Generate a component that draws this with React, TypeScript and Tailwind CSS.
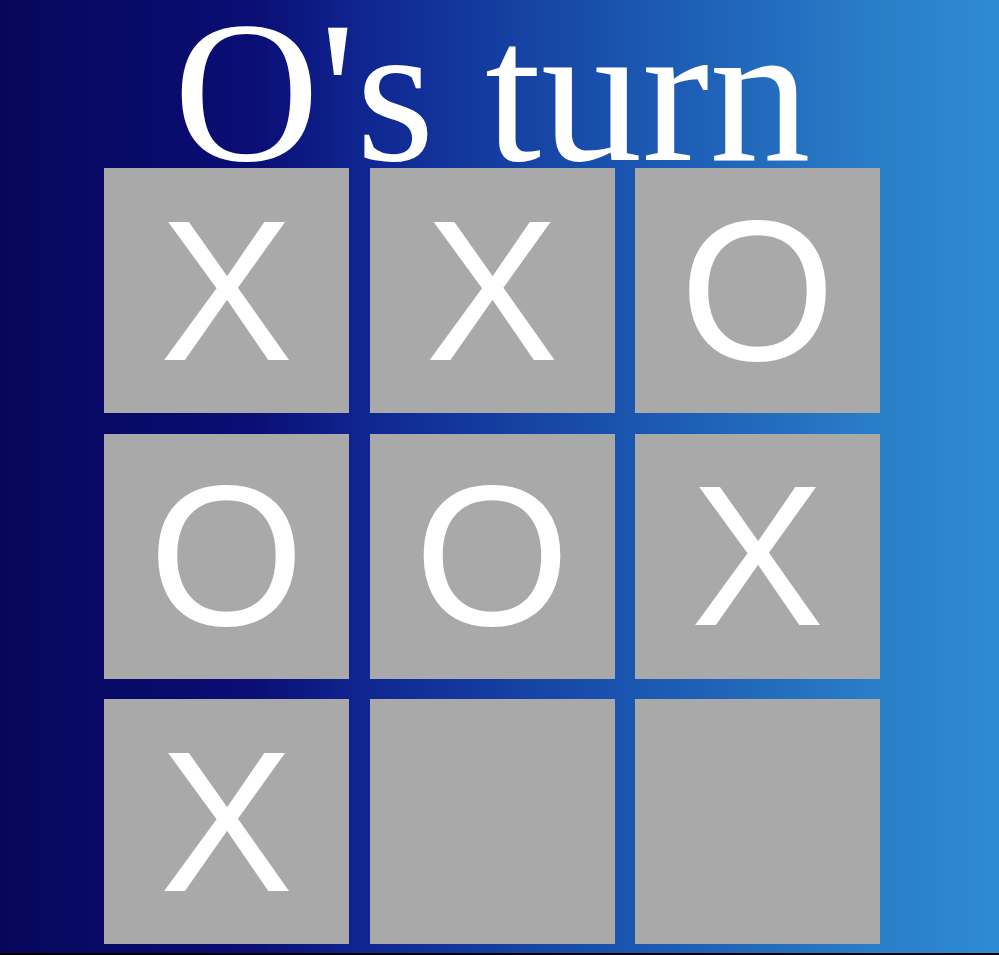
import React from 'react';

type Mark = 'X' | 'O' | null;

const board: Mark[] = ['X', 'X', 'O', 'O', 'O', 'X', 'X', null, null];

function Square({ value }: { value: Mark }) {
  return (
    <button className="flex h-[245px] w-[245px] items-center justify-center bg-[#a9a9a9] font-['Liberation_Sans',Arial,sans-serif] text-[200px] leading-none text-white">
      {value}
    </button>
  );
}

export default function App() {
  return (
    <div className="h-[955px] w-full bg-black">
      <div className="h-[953px] w-full bg-[linear-gradient(to_right,#06075a_0%,#0a0d74_25%,#0f2590_36%,#1a55b0_63%,#2a7ec8_88%,#2e8bd4_100%)]">
        <div className="w-[984px]">
          <h1 className="h-[168px] pt-[16px] text-center font-['Liberation_Serif','Times_New_Roman',serif] text-[202px] leading-[152px] text-white">
            O's turn
          </h1>
          <div className="ml-[104px] grid w-[776px] grid-cols-3 gap-[20.5px]">
            {board.map((v, i) => (
              <Square key={i} value={v} />
            ))}
          </div>
        </div>
      </div>
    </div>
  );
}
